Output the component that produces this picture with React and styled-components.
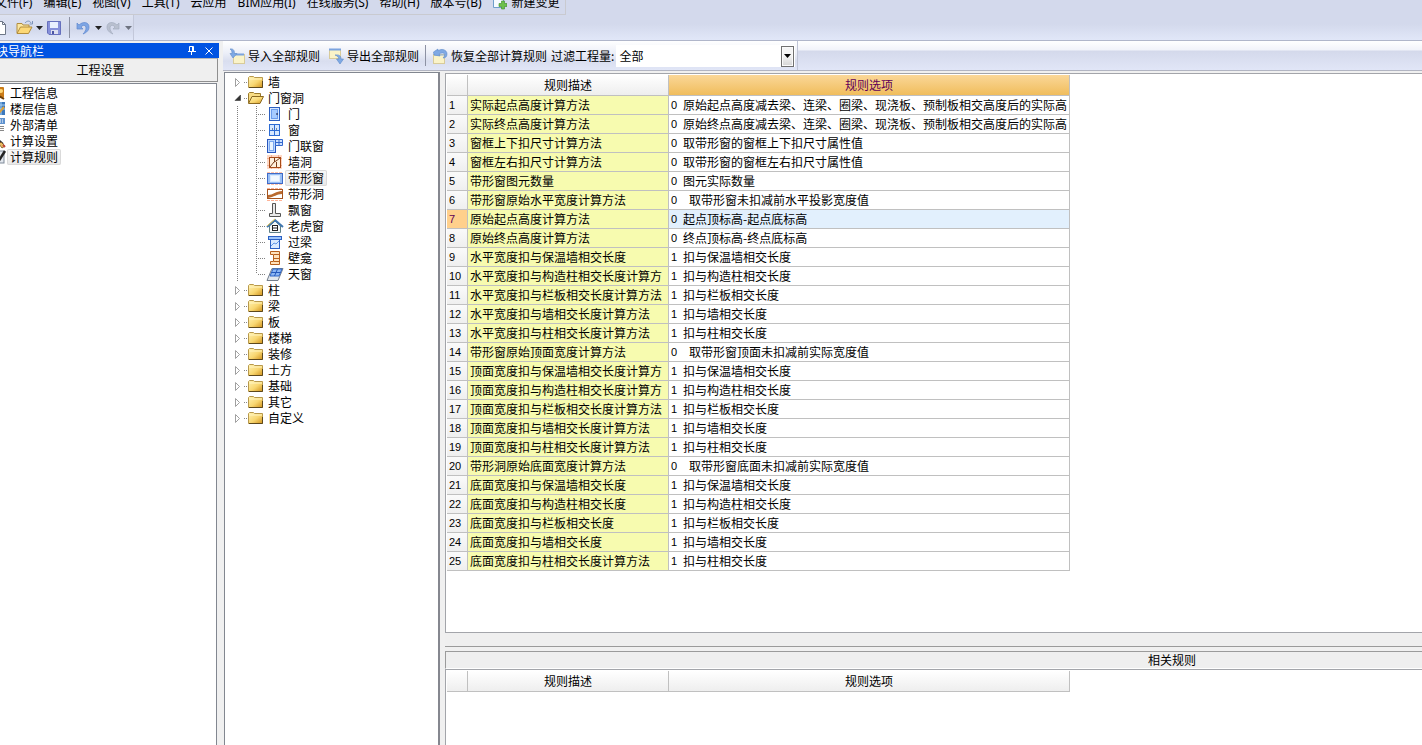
import React from "react";
import styled, { createGlobalStyle, css } from "styled-components";

const GlobalStyle = createGlobalStyle`
  * { box-sizing: border-box; }
  body {
    margin: 0;
    background: #f0f0f0;
    color: #000;
    font: 12px/16px "Noto Sans CJK SC", "Liberation Sans", sans-serif;
    overflow: hidden;
  }
  button, select {
    font: inherit;
    color: inherit;
    border: 0;
    padding: 0;
    margin: 0;
    background: none;
  }
  ul { list-style: none; margin: 0; padding: 0; }
  svg { display: block; flex: none; }
`;

const Window = styled.div`
  display: flex;
  flex-direction: column;
  height: 100vh;
  overflow: hidden;
`;

const TopArea = styled.header`
  flex: none;
  background: linear-gradient(#d3d9ec 60%, #e1e7f8);
  border-bottom: 1px solid #b0b6ca;
`;

const MenuBar = styled.nav`
  display: inline-flex;
  align-items: flex-end;
  gap: 11px;
  height: 15px;
  padding-right: 5px;
  margin-left: -5px;
  overflow: hidden;
  border-right: 1px solid #c9cad0;
  border-bottom: 1px solid #c9cad0;
  vertical-align: top;
`;

const MenuItem = styled.button`
  display: flex;
  align-items: center;
  gap: 5px;
  flex: none;
  line-height: 22px;
  white-space: nowrap;
  font-family: "Noto Sans", "Noto Sans CJK SC", sans-serif;
`;

const QuickBar = styled.div`
  display: flex;
  align-items: center;
  width: 134px;
  height: 25px;
  border-right: 1px solid #c3c8da;
  background: linear-gradient(#dde2f1, #d3d9ec 60%, #e1e7f8);
`;

const ToolButton = styled.button`
  flex: none;
  width: ${(p) => p.$w}px;
  height: 20px;
  display: flex;
  align-items: center;
  justify-content: ${(p) => (p.$end ? "flex-end" : "center")};
`;

const Divider = styled.span`
  flex: none;
  width: 1px;
  height: 21px;
  margin: 0 6px;
  background: #8d92a4;
`;

const Body = styled.div`
  flex: 1;
  min-height: 0;
  display: flex;
`;

const Sidebar = styled.aside`
  flex: none;
  width: 223px;
  padding: 2px 4px 0 0;
  display: flex;
  flex-direction: column;
`;

const SideTitle = styled.div`
  display: flex;
  align-items: center;
  height: 15px;
  padding-right: 2px;
  background: #0053e2;
  color: #fff;
  line-height: 15px;
`;

const SideTitleText = styled.span`
  flex: 1;
  margin-left: -4px;
`;

const SideHeader = styled.button`
  height: 24px;
  margin-right: 1px;
  padding-right: 16px;
  border: 1px solid #8f8f8f;
  border-top-color: #b8b8b8;
  border-left: 0;
  background: #efefef;
  text-align: center;
`;

const SideList = styled.ul`
  flex: 1;
  margin: 1px 2px 0 0;
  padding-top: 1px;
  background: #fff;
  border-top: 1px solid #828790;
  border-right: 1px solid #828790;
`;

const SideItem = styled.button`
  display: flex;
  align-items: center;
  height: 16px;
  margin-left: -11px;
`;

const Label = styled.span`
  display: block;
  height: 16px;
  line-height: 16px;
  padding: 0 3px;
  white-space: nowrap;
  ${(p) =>
    p.$selected &&
    css`
      background: linear-gradient(#f9f9f9, #e8e8e8);
      box-shadow: inset 0 0 0 1px #dadada;
      border-radius: 2px;
    `}
`;

const Main = styled.main`
  flex: 1;
  min-width: 0;
  display: flex;
  flex-direction: column;
`;

const RuleBar = styled.div`
  flex: none;
  height: 30px;
  background: linear-gradient(#fff 0, #f1f3fa 9px, #d4d9eb 10px, #e1e6f7 100%);
  border-bottom: 1px solid #b2b5c2;
`;

const RuleTools = styled.div`
  display: flex;
  align-items: center;
  width: 575px;
  height: 29px;
  padding: 0 2px 0 6px;
  border-right: 1px solid #c0c5d6;
  background: linear-gradient(#fff 0, #eceff8 12px, #d9deef 20px, #e1e6f7 100%);
`;

const RuleButton = styled.button`
  flex: none;
  display: flex;
  align-items: center;
  gap: 3px;
  height: 24px;
  margin-right: ${(p) => p.$gap}px;
  white-space: nowrap;
`;

const FilterLabel = styled.label`
  flex: none;
  white-space: nowrap;
`;

const Combo = styled.div`
  position: relative;
  flex: 1;
  height: 22px;
  margin-left: 2px;
`;

const ComboSelect = styled.select`
  appearance: none;
  width: 100%;
  height: 22px;
  padding: 0 18px 0 3px;
  background: #fff;
  border-radius: 0;
`;

const ComboArrow = styled.span`
  position: absolute;
  top: 1px;
  right: 1px;
  width: 13px;
  height: 21px;
  display: flex;
  align-items: center;
  justify-content: center;
  border: 1px solid #707070;
  background: linear-gradient(#f4f4f4 45%, #d4d4d4);
  box-shadow: inset 0 0 0 1px #fafafa;
  pointer-events: none;
`;

const Panels = styled.div`
  flex: 1;
  min-height: 0;
  display: flex;
  padding: 1px 0 0 1px;
`;

const TreePanel = styled.ul`
  flex: none;
  width: 216px;
  padding: 1px 0 0 8px;
  background: #fff;
  border: 1px solid #828790;
  border-right: 2px solid #85878f;
  border-bottom: 0;
`;

const TreeItem = styled.button`
  display: flex;
  align-items: center;
  height: 16px;
`;

const Right = styled.section`
  flex: 1;
  min-width: 0;
  margin-left: 5px;
  display: flex;
  flex-direction: column;
`;

const GridPanel = styled.div`
  flex: ${(p) => (p.$fill ? "1" : "none")};
  margin-top: ${(p) => (p.$fill ? 0 : 1)}px;
  padding: 1px 0 ${(p) => (p.$fill ? 0 : 61)}px 1px;
  background: #fff;
  border-top: 1px solid #a3a5aa;
  border-left: 1px solid #a3a5aa;
  border-bottom: ${(p) => (p.$fill ? 0 : 1)}px solid #a3a5aa;
`;

const ScrollStrip = styled.div`
  flex: none;
  height: 14px;
  background: #efefef;
  border-bottom: 1px solid #9b9b9b;
`;

const RelatedTitle = styled.h2`
  flex: none;
  height: 18px;
  margin: 4px 0 0;
  padding-left: 476px;
  font-size: 12px;
  font-weight: 400;
  line-height: 16px;
  text-align: center;
  background: #efefef;
  border: 1px solid #9b9b9b;
  border-right: 0;
  border-bottom-color: #fff;
`;

const Grid = styled.table`
  width: 623px;
  table-layout: fixed;
  border-spacing: 0;
`;

const HeadCell = styled.th`
  height: 21px;
  padding: 0;
  font-weight: 400;
  line-height: 20px;
  border-right: 1px solid #c0c0c0;
  border-bottom: 1px solid #c0c0c0;
  background: ${(p) => (p.$active ? "linear-gradient(#fad798, #f0bd5c)" : "linear-gradient(#fff, #eee)")};
  color: ${(p) => (p.$active ? "#600058" : "#000")};
`;

const RowHead = styled.th`
  height: 19px;
  padding: 0 0 0 2px;
  font: 11px/18px "Liberation Sans", sans-serif;
  text-align: left;
  border-right: 1px solid #c0c0c0;
  border-bottom: 1px solid #c0c0c0;
  background: ${(p) => (p.$active ? "#ffd08c" : "linear-gradient(#fafafa, #efefef)")};
  color: ${(p) => (p.$active ? "#600058" : "#000")};
`;

const Cell = styled.td`
  height: 19px;
  padding: 0 2px;
  line-height: 18px;
  white-space: nowrap;
  overflow: hidden;
  border-right: 1px solid #c0c0c0;
  border-bottom: 1px solid #c0c0c0;
  background: ${(p) => (p.$named ? "#f7fbaf" : p.$active ? "#e2f0fd" : "#fff")};
`;

const Code = styled.span`
  display: inline-block;
  vertical-align: top;
  width: ${(p) => (p.$wide ? 18 : 12)}px;
  font: 11px/18px "Liberation Sans", sans-serif;
`;

const Caret = ({ color = "#222" }) => (
  <svg width="7" height="4" viewBox="0 0 7 4"><path d="M0 0h7L3.500 4z" fill={color} /></svg>
);

const FolderClosed = () => (
  <svg width="18" height="16" viewBox="0 0 18 16">
    <defs>
      <linearGradient id="fold" x1="0" y1="0" x2="1" y2="1">
        <stop offset="0" stopColor="#fff3b4" /><stop offset=".55" stopColor="#f8d670" /><stop offset="1" stopColor="#d0921c" />
      </linearGradient>
    </defs>
    <path d="M1.500 13.500v-10l1-1h4l1 1h8v10z" fill="url(#fold)" stroke="#b8994c" />
    <path d="M2 5h13" stroke="#fff4bf" />
    <path d="M2 13.500h13.500V7" fill="none" stroke="#5d481c" />
  </svg>
);

const FolderOpen = () => (
  <svg width="18" height="16" viewBox="0 0 18 16">
    <path d="M1.500 13V3.500l1-1h4l1 1h6V7" fill="#f8dc84" stroke="#9a7a2c" />
    <path d="M1.500 13.500l3.500-7h11.500l-3.500 7z" fill="url(#fold)" stroke="#8a6820" />
  </svg>
);

const TREE_ICONS = {
  door: <><rect x="3.500" y="1.500" width="10" height="13" fill="#d6e8ff" stroke="#2c5fc0" /><rect x="5.500" y="3.500" width="6" height="9" fill="#a6cbff" stroke="#6b9cec" /><path d="M11 7v2" stroke="#113" /></>,
  window: <><rect x="3.500" y="2.500" width="10" height="11" fill="#d6e8ff" stroke="#2c6bd4" /><path d="M8.500 3v11M4 8.500h9" stroke="#2c6bd4" /><path d="M6 7h1M10 7h1" stroke="#124" /></>,
  doorWindow: <><rect x="1.500" y="1.500" width="8" height="13" fill="#bcd8ff" stroke="#2957bd" /><rect x="3.500" y="3.500" width="4" height="9" fill="#eaf4ff" stroke="#7aa7ef" /><path d="M9.500 1.500h7v6h-7zM13 1.500v6M9.500 4.500h7" fill="#cde2ff" stroke="#3469ce" /></>,
  wallHole: <><rect x="1" y="1" width="15" height="14" fill="#ffd9c6" /><path d="M1 4.500h15M1 11.500h15M5.500 1v14M12.500 1v14" stroke="#f2b093" /><rect x="3.500" y="3.500" width="11" height="10" fill="#fff0dc" stroke="#a84c18" /><path d="M4 13l4-5 2-1 4-3M8.500 4v4M10.500 8v5" fill="none" stroke="#7a3c18" /></>,
  stripWindow: <><path d="M1 2.500h16M1 14.500h16" stroke="#ffc4aa" strokeDasharray="3 1" /><rect x="1.500" y="3.500" width="15" height="10" fill="#98bff5" stroke="#3f6bc8" /><rect x="4.500" y="5.500" width="9" height="6" fill="#f1f8ff" stroke="#d9eaff" /></>,
  stripHole: <><path d="M1 2.500h16M1 14.500h16" stroke="#ffb397" strokeDasharray="3 1" /><rect x="1.500" y="3.500" width="15" height="9" fill="#fff" stroke="#a5541f" /><path d="M2 9c5 0 8-4 14-4v3c-5 0-8 3-14 4z" fill="#b96a2e" /></>,
  bay: <path d="M6.500 1.500h3v10h5v3h-11v-3h3z" fill="#e8e8e8" stroke="#555" />,
  dormer: <><path d="M3.500 8v6.500h11V8L9 3z" fill="#f4f8f6" stroke="#5e7f86" /><path d="M1 9l8-7 8 7" fill="none" stroke="#3f76b0" strokeWidth="2" /><path d="M1 8l8-7" stroke="#e8c650" /><rect x="6.500" y="7.500" width="5" height="5" fill="#fff" stroke="#222" /><path d="M7 10h4" stroke="#222" /></>,
  lintel: <><rect x="2.500" y="2.500" width="13" height="3" fill="#9cc5fb" stroke="#2b61c4" /><rect x="4.500" y="5.500" width="9" height="9" fill="#d9eaff" stroke="#2b61c4" /><path d="M5 12l3-3 2 1 3-3" fill="none" stroke="#5f96e6" /></>,
  niche: <path d="M4.500 1.500h9v13h-9v-3h3v-7h-3zM8 4.500h5M8 8.500h5M8 11.500h5" fill="#ffe2bc" stroke="#b8601c" />,
  skylight: <><path d="M6 2.500h11l-5 12H1z" fill="#e2e8ee" stroke="#747e8c" /><path d="M7 3h9l-3 7H4z" fill="#8bb6f4" stroke="#2f66c7" /><path d="M11.500 3L8.500 10M5.500 6.500h9" stroke="#2459bb" /></>,
};

const TreeIcon = ({ name }) => <svg width="19" height="16" viewBox="0 0 19 16">{TREE_ICONS[name]}</svg>;

const RootGuide = ({ open }) => (
  <svg width="14" height="16" viewBox="0 0 14 16">
    {open ? <path d="M2 10.500h5.500V5z" fill="#333" stroke="#222" strokeWidth=".5" /> : <path d="M2.500 4.500v8l4-4z" fill="#fff" stroke="#a0a0a0" />}
    <path d="M11 8.500h3" stroke="#888" strokeDasharray="1 1" />
  </svg>
);

const ChildGuide = ({ last }) => (
  <svg width="33" height="16" viewBox="0 0 33 16">
    <path d={`M4.500 0v16M23.500 0v${last ? 8 : 16}M25 8.500h8`} stroke="#808080" strokeDasharray="1 1" fill="none" />
  </svg>
);

const SIDE_ICONS = [
  <><rect x="8" y="2" width="7" height="11" rx="1" fill="#c97a16" /><circle cx="12" cy="6" r="2" fill="#ffd777" /><path d="M10 11l5 3" stroke="#6b3c08" strokeWidth="2" /></>,
  <><rect x="7" y="1" width="9" height="13" fill="#3b78bd" /><path d="M7 4h9M7 8h9M12 1v13" stroke="#a9d2f4" /><path d="M9 13l6-7" stroke="#e0a33a" strokeWidth="2" /></>,
  <><rect x="8" y="1" width="8" height="6" fill="#5f92cf" /><path d="M9 3h6M9 5h6" stroke="#fff" strokeDasharray="1 1" /><path d="M8 9.500h7M8 11.500h7M8 13.500h7" stroke="#888" /></>,
  <><path d="M5 3l9 8" stroke="#333" strokeWidth="2" /><path d="M12 9l4 4-3 2-3-4z" fill="#e9bd63" stroke="#7b4d19" strokeWidth=".8" /><path d="M14 12l2 2" stroke="#c2453b" strokeWidth="2" /></>,
  <><rect x="5" y="2" width="10" height="12" fill="#e2e7ee" stroke="#7e8998" /><path d="M9 13l7-11" stroke="#222" strokeWidth="2.500" /></>,
];

const ImportIcon = () => (
  <svg width="16" height="16" viewBox="0 0 16 16">
    <rect x="4.500" y="6.500" width="11" height="9" fill="#faf3c8" stroke="#d8cb9a" />
    <path d="M5 6.500h10" stroke="#7ba3df" strokeWidth="2" />
    <path d="M1 1c3-.5 4.500 1 4.500 4.500H8L4 10 1 5.500h2C3 3 2.500 2 1 1z" fill="#7fa9e4" stroke="#5d8aca" strokeWidth=".6" />
  </svg>
);

const ExportIcon = () => (
  <svg width="16" height="16" viewBox="0 0 16 16">
    <rect x="1.500" y="1.500" width="11" height="9" fill="#faf3c8" stroke="#d8cb9a" />
    <path d="M1 1.500h12" stroke="#7ba3df" strokeWidth="2" />
    <path d="M7 7c4-.5 6 .5 6 4h2.500L12 16l-3.500-5H11C10.500 9 9.500 8 7 7z" fill="#7fa9e4" stroke="#5d8aca" strokeWidth=".6" />
  </svg>
);

const RestoreIcon = () => (
  <svg width="16" height="16" viewBox="0 0 16 16">
    <rect x="1.500" y="6.500" width="11" height="9" fill="#faf3c8" stroke="#d8cb9a" />
    <path d="M2 7h10" stroke="#8bafdf" />
    <path d="M1.500 4L6 1v2c3-3 9-1.500 9 3 0 3-2 4-4 4 2-2 2.500-5-.5-5C9 5 8 5.500 7 6l1 2-6-1z" fill="#7fa9e4" stroke="#5d8aca" strokeWidth=".6" />
  </svg>
);

const UndoIcon = ({ color, edge, flip }) => (
  <svg width="14" height="14" viewBox="0 0 14 14">
    <path
      transform={flip ? "translate(14 0) scale(-1 1)" : undefined}
      d="M1 2v6h6L5 6c2-2.500 5-2 5 1 0 2-1 4-3 6 4-1.500 6-4 6-7 0-5-6-6-10-2z"
      fill={color} stroke={edge} strokeWidth=".7"
    />
  </svg>
);

const MENUS = ["文件(F)", "编辑(E)", "视图(V)", "工具(T)", "云应用", "BIM应用(I)", "在线服务(S)", "帮助(H)", "版本号(B)"];
const SIDE_ITEMS = ["工程信息", "楼层信息", "外部清单", "计算设置", "计算规则"];
const OPENINGS = [
  ["door", "门"], ["window", "窗"], ["doorWindow", "门联窗"], ["wallHole", "墙洞"], ["stripWindow", "带形窗"], ["stripHole", "带形洞"],
  ["bay", "飘窗"], ["dormer", "老虎窗"], ["lintel", "过梁"], ["niche", "壁龛"], ["skylight", "天窗"],
];
const CATEGORIES = ["墙", "门窗洞", "柱", "梁", "板", "楼梯", "装修", "土方", "基础", "其它", "自定义"];
const RULES = [
  ["实际起点高度计算方法", 0, "原始起点高度减去梁、连梁、圈梁、现浇板、预制板相交高度后的实际高"],
  ["实际终点高度计算方法", 0, "原始终点高度减去梁、连梁、圈梁、现浇板、预制板相交高度后的实际高"],
  ["窗框上下扣尺寸计算方法", 0, "取带形窗的窗框上下扣尺寸属性值"],
  ["窗框左右扣尺寸计算方法", 0, "取带形窗的窗框左右扣尺寸属性值"],
  ["带形窗图元数量", 0, "图元实际数量"],
  ["带形窗原始水平宽度计算方法", 0, "取带形窗未扣减前水平投影宽度值", true],
  ["原始起点高度计算方法", 0, "起点顶标高-起点底标高"],
  ["原始终点高度计算方法", 0, "终点顶标高-终点底标高"],
  ["水平宽度扣与保温墙相交长度", 1, "扣与保温墙相交长度"],
  ["水平宽度扣与构造柱相交长度计算方", 1, "扣与构造柱相交长度"],
  ["水平宽度扣与栏板相交长度计算方法", 1, "扣与栏板相交长度"],
  ["水平宽度扣与墙相交长度计算方法", 1, "扣与墙相交长度"],
  ["水平宽度扣与柱相交长度计算方法", 1, "扣与柱相交长度"],
  ["带形窗原始顶面宽度计算方法", 0, "取带形窗顶面未扣减前实际宽度值", true],
  ["顶面宽度扣与保温墙相交长度计算方", 1, "扣与保温墙相交长度"],
  ["顶面宽度扣与构造柱相交长度计算方", 1, "扣与构造柱相交长度"],
  ["顶面宽度扣与栏板相交长度计算方法", 1, "扣与栏板相交长度"],
  ["顶面宽度扣与墙相交长度计算方法", 1, "扣与墙相交长度"],
  ["顶面宽度扣与柱相交长度计算方法", 1, "扣与柱相交长度"],
  ["带形洞原始底面宽度计算方法", 0, "取带形窗底面未扣减前实际宽度值", true],
  ["底面宽度扣与保温墙相交长度", 1, "扣与保温墙相交长度"],
  ["底面宽度扣与构造柱相交长度", 1, "扣与构造柱相交长度"],
  ["底面宽度扣与栏板相交长度", 1, "扣与栏板相交长度"],
  ["底面宽度扣与墙相交长度", 1, "扣与墙相交长度"],
  ["底面宽度扣与柱相交长度计算方法", 1, "扣与柱相交长度"],
];
const SELECTED_RULE = 6;

const NumberCol = styled.col`
  width: 21px;
`;
const NameCol = styled.col`
  width: 201px;
`;

const GridHead = ({ active }) => (
  <>
    <colgroup><NumberCol /><NameCol /><col /></colgroup>
    <thead>
      <tr>
        <HeadCell />
        <HeadCell scope="col">规则描述</HeadCell>
        <HeadCell scope="col" $active={active}>规则选项</HeadCell>
      </tr>
    </thead>
  </>
);

const BarStack = styled.div`
  display: flex;
  flex-direction: column;
  align-items: flex-start;
  height: 40px;
`;

export default function App() {
  return (
    <Window>
      <GlobalStyle />
      <TopArea>
        <BarStack>
          <MenuBar>
            {MENUS.map((m) => <MenuItem key={m}>{m}</MenuItem>)}
            <MenuItem>
              <svg width="14" height="16" viewBox="0 0 14 16">
                <path d="M.5.500h10v12H.5z" fill="#f6fbff" stroke="#6f9fcb" />
                <path d="M8.500 6h3v2.500H14v3h-2.500V14h-3v-2.500H6v-3h2.500z" fill="#6cc04a" stroke="#3d8a28" strokeWidth=".6" />
              </svg>
              新建变更
            </MenuItem>
          </MenuBar>
          <QuickBar>
            <ToolButton $w={6} $end aria-label="新建">
              <svg width="12" height="14" viewBox="0 0 12 14"><path d="M.5.500h8l3 3v10H.5z" fill="#fff" stroke="#6d7686" /><path d="M8.500.500v3h3" fill="none" stroke="#6d7686" /></svg>
            </ToolButton>
            <ToolButton $w={28} $end aria-label="打开">
              <svg width="18" height="15" viewBox="0 0 18 15">
                <path d="M1 13V3.500h5l1 1.500h6v3" fill="#fbe7a0" stroke="#b28d3e" />
                <path d="M1 13.500L4.500 7H16l-3.500 6.500z" fill="#fcd877" stroke="#b28d3e" />
                <path d="M9 3c2-2.500 5-2.500 6 0M16.500 1v3h-3" fill="none" stroke="#7c93b8" />
              </svg>
            </ToolButton>
            <ToolButton $w={11} aria-label="打开选项"><Caret /></ToolButton>
            <ToolButton $w={18} aria-label="保存">
              <svg width="14" height="14" viewBox="0 0 14 14">
                <path d="M.5.500h13v13H2l-1.500-1.500z" fill="#8690da" stroke="#6670bd" />
                <rect x="3" y="1" width="8" height="6" fill="#e9f0ff" /><rect x="4" y="9" width="7" height="4" fill="#dcdff0" /><rect x="5" y="10" width="2" height="3" fill="#4b55a4" />
              </svg>
            </ToolButton>
            <Divider />
            <ToolButton $w={14} aria-label="撤销"><UndoIcon color="#7da5e4" edge="#5f87cf" /></ToolButton>
            <ToolButton $w={16} aria-label="撤销选项"><Caret /></ToolButton>
            <ToolButton $w={14} aria-label="重做"><UndoIcon flip color="#b9c0cf" edge="#a4acbe" /></ToolButton>
            <ToolButton $w={16} aria-label="重做选项"><Caret color="#6e7380" /></ToolButton>
          </QuickBar>
        </BarStack>
      </TopArea>

      <Body>
        <Sidebar>
          <SideTitle>
            <SideTitleText>块导航栏</SideTitleText>
            <ToolButton $w={18} aria-label="固定">
              <svg width="8" height="9" viewBox="0 0 8 9"><path d="M1.500 5V.5h4V5M4.500.500V5M0 5.500h8M3.500 6v3" fill="none" stroke="#fff" /></svg>
            </ToolButton>
            <ToolButton $w={16} aria-label="关闭">
              <svg width="8" height="8" viewBox="0 0 8 8"><path d="M.5.500l7 7M7.500.500l-7 7" stroke="#fff" /></svg>
            </ToolButton>
          </SideTitle>
          <SideHeader>工程设置</SideHeader>
          <SideList>
            {SIDE_ITEMS.map((name, i) => (
              <li key={name}>
                <SideItem>
                  <svg width="18" height="16" viewBox="0 0 18 16">{SIDE_ICONS[i]}</svg>
                  <Label $selected={i === 4}>{name}</Label>
                </SideItem>
              </li>
            ))}
          </SideList>
        </Sidebar>

        <Main>
          <RuleBar>
            <RuleTools>
              <RuleButton $gap={8}><ImportIcon />导入全部规则</RuleButton>
              <RuleButton $gap={0}><ExportIcon />导出全部规则</RuleButton>
              <Divider />
              <RuleButton $gap={4}><RestoreIcon />恢复全部计算规则</RuleButton>
              <FilterLabel htmlFor="quantity-filter">过滤工程量:</FilterLabel>
              <Combo>
                <ComboSelect id="quantity-filter" defaultValue="全部"><option>全部</option></ComboSelect>
                <ComboArrow><Caret color="#000" /></ComboArrow>
              </Combo>
            </RuleTools>
          </RuleBar>

          <Panels>
            <TreePanel>
              {CATEGORIES.map((name, i) => (
                <li key={name}>
                  <TreeItem>
                    <RootGuide open={i === 1} />
                    {i === 1 ? <FolderOpen /> : <FolderClosed />}
                    <Label>{name}</Label>
                  </TreeItem>
                  {i === 1 && (
                    <ul>
                      {OPENINGS.map(([icon, label], k) => (
                        <li key={icon}>
                          <TreeItem>
                            <ChildGuide last={k === OPENINGS.length - 1} />
                            <TreeIcon name={icon} />
                            <Label $selected={icon === "stripWindow"}>{label}</Label>
                          </TreeItem>
                        </li>
                      ))}
                    </ul>
                  )}
                </li>
              ))}
            </TreePanel>

            <Right>
              <GridPanel>
                <Grid>
                  <GridHead active />
                  <tbody>
                    {RULES.map(([name, code, option, wide], i) => (
                      <tr key={name}>
                        <RowHead scope="row" $active={i === SELECTED_RULE}>{i + 1}</RowHead>
                        <Cell $named>{name}</Cell>
                        <Cell $active={i === SELECTED_RULE}><Code $wide={wide}>{code}</Code>{option}</Cell>
                      </tr>
                    ))}
                  </tbody>
                </Grid>
              </GridPanel>
              <ScrollStrip />
              <RelatedTitle>相关规则</RelatedTitle>
              <GridPanel $fill>
                <Grid><GridHead /></Grid>
              </GridPanel>
            </Right>
          </Panels>
        </Main>
      </Body>
    </Window>
  );
}
